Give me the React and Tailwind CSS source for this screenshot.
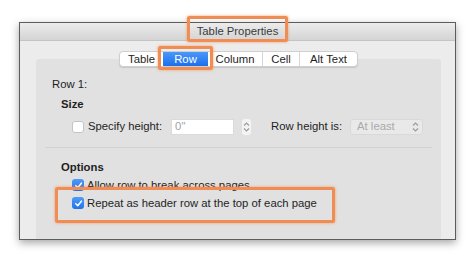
import React from "react";

const tabs = [
  { label: "Table", w: "w-[43px]" },
  { label: "Row", w: "w-[45px]", active: true },
  { label: "Column", w: "w-[54px]" },
  { label: "Cell", w: "w-[37px]" },
  { label: "Alt Text", w: "w-[58px]" },
];

function Check({ checked }) {
  if (!checked) {
    return (
      <span className="w-[12px] h-[12px] rounded-[3px] bg-white border border-[#c4c4c4] shrink-0" />
    );
  }
  return (
    <span className="w-[12px] h-[12px] rounded-[3px] bg-gradient-to-b from-[#4d9bf8] to-[#1f72ee] flex items-center justify-center shrink-0">
      <svg width="9" height="9" viewBox="0 0 10 10">
        <path d="M2 5.2 L4.2 7.4 L8.2 2.4" fill="none" stroke="white" strokeWidth="1.7" strokeLinecap="round" strokeLinejoin="round" />
      </svg>
    </span>
  );
}

function Updown({ color = "#8a8a8a" }) {
  return (
    <svg width="7" height="12" viewBox="0 0 7 12">
      <path d="M1 4.5 L3.5 2 L6 4.5" fill="none" stroke={color} strokeWidth="1.1" />
      <path d="M1 7.5 L3.5 10 L6 7.5" fill="none" stroke={color} strokeWidth="1.1" />
    </svg>
  );
}

export default function App() {
  return (
    <div className="w-[474px] h-[262px] bg-white relative overflow-hidden pl-[19px] pt-[22px] font-['Liberation_Sans',Arial,sans-serif] text-[11.3px] text-[#1e1e1e]">
      {/* window */}
      <div className="w-[437px] h-[218px] bg-[#ececec] border border-[#5c5c5c] shadow-[0_3px_8px_rgba(0,0,0,0.35)] flex flex-col">
        <div className="h-[18px] shrink-0 bg-gradient-to-b from-[#ececec] to-[#d4d4d4] border-b border-[#c4c4c4] flex items-center justify-center text-[#3a3a3a]">
          Table Properties
        </div>

        <div className="flex-1 flex flex-col pl-[16px] pr-[14px] pt-[18px]">
          <div className="flex-1 bg-[#e1e1e1] rounded-t-[3px] flex flex-col">
            {/* tabs */}
            <div className="flex justify-center -mt-[8px]">
              <div className="flex h-[16px] bg-white rounded-[4px] border border-[#cfcfcf] shadow-[0_1px_1px_rgba(0,0,0,0.12)] overflow-hidden">
                {tabs.map((t, i) => (
                  <div
                    key={t.label}
                    className={`${t.w} flex items-center justify-center ${
                      t.active
                        ? "bg-gradient-to-b from-[#4a98f8] to-[#1c6eee] text-white"
                        : i > 2 ? "border-l border-[#d6d6d6]" : ""
                    }`}
                  >
                    {t.label}
                  </div>
                ))}
              </div>
            </div>

            <div className="pl-[16px] pt-[10px] flex flex-col">
              <div className="h-[14px] flex items-center">Row 1:</div>
              <div className="h-[14px] mt-[6px] pl-[9px] flex items-center font-bold">Size</div>

              <div className="h-[17px] mt-[7px] pl-[20px] flex items-center">
                <Check />
                <span className="ml-[2px] pl-[2px]">Specify height:</span>
                <div className="ml-[9px] w-[63px] h-[16px] bg-white border border-[#dadada] flex items-center pl-[3px] text-[#a3a3a3]">
                  0"
                </div>
                <div className="ml-[8px] w-[9px] h-[16px] rounded-[3px] bg-[#f4f4f4] flex items-center justify-center">
                  <Updown color="#9a9a9a" />
                </div>
                <span className="ml-[20px]">Row height is:</span>
                <div className="ml-[8px] w-[73px] h-[16px] rounded-[3px] bg-[#e9e9e9] border border-[#d9d9d9] flex items-center justify-between pl-[6px] pr-[3px] text-[#a9a9a9]">
                  At least
                  <Updown color="#9a9a9a" />
                </div>
              </div>

              <div className="h-px bg-[#d2d2d2] mt-[12px] -ml-[7px] mr-[9px]" />

              <div className="h-[14px] mt-[12px] pl-[9px] flex items-center font-bold">Options</div>
              <div className="h-[14px] mt-[4px] pl-[20px] flex items-center gap-[3px]">
                <Check checked />
                <span>Allow row to break across pages</span>
              </div>
              <div className="h-[14px] mt-[4px] pl-[20px] flex items-center gap-[3px]">
                <Check checked />
                <span>Repeat as header row at the top of each page</span>
              </div>
            </div>
          </div>
        </div>
      </div>

      {/* annotation highlights */}
      <div className="absolute left-[187px] top-[16px] w-[101px] h-[26px] border-[3px] border-[#ef8d55] rounded-[2px] shadow-[0_0_3px_rgba(240,140,80,0.8)]" />
      <div className="absolute left-[158px] top-[46px] w-[55px] h-[24px] border-[3px] border-[#ef8d55] rounded-[2px] shadow-[0_0_3px_rgba(240,140,80,0.8)]" />
      <div className="absolute left-[55px] top-[187px] w-[280px] h-[36px] border-[3px] border-[#ef8d55] rounded-[2px] shadow-[0_0_3px_rgba(240,140,80,0.8)]" />
    </div>
  );
}
